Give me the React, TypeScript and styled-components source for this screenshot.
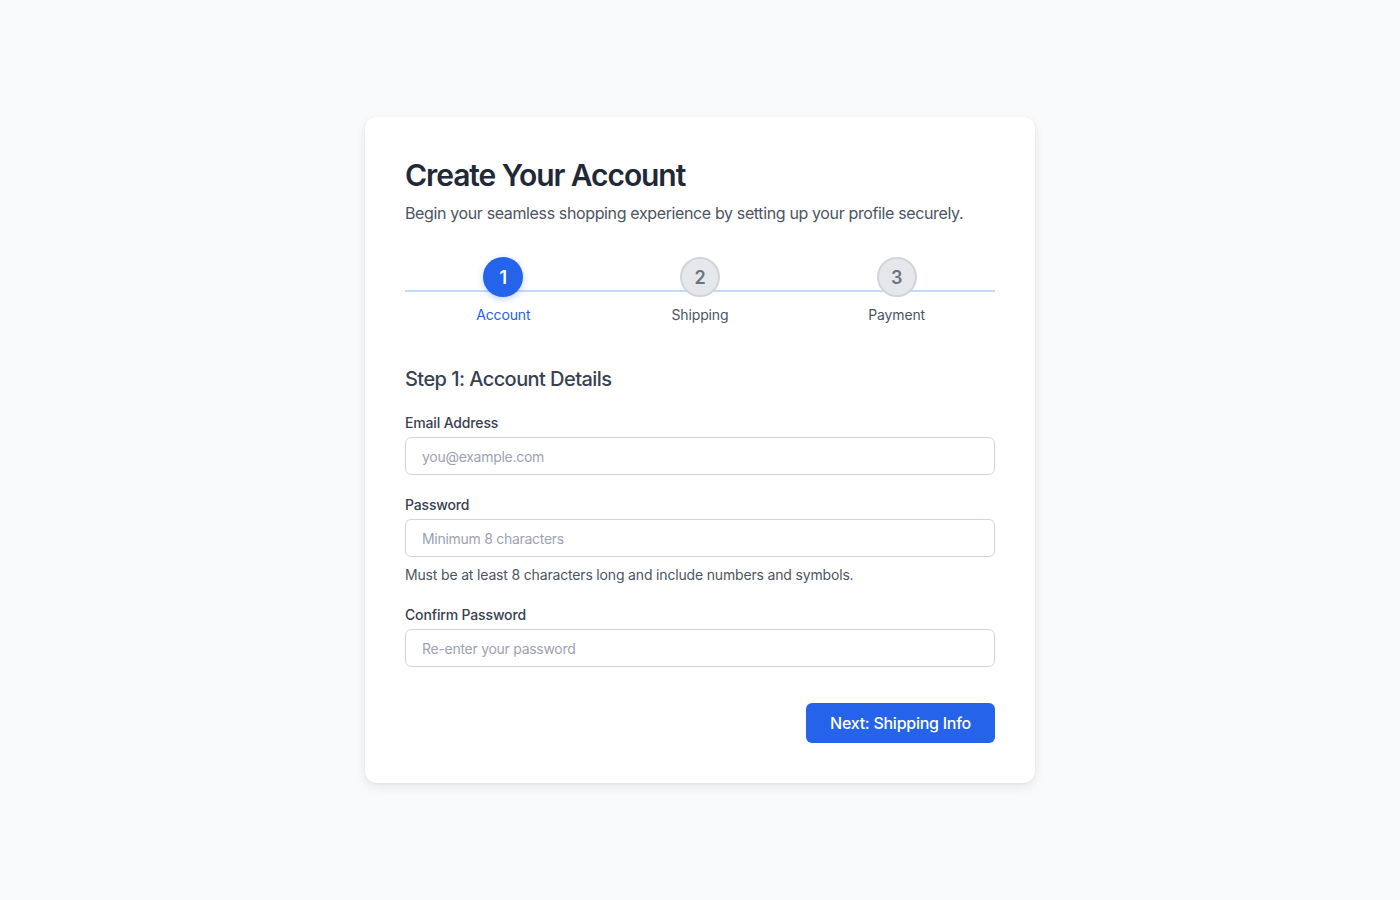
import React from "react";
import styled, { createGlobalStyle } from "styled-components";

const GlobalStyle = createGlobalStyle`
  * { box-sizing: border-box; }
  body {
    margin: 0;
    background: #f9fafb;
    font-family: Inter, "Noto Sans", "Liberation Sans", sans-serif;
    color: #1f2937;
  }
`;

const Page = styled.div`
  min-height: 100vh;
  display: flex;
  align-items: center;
  justify-content: center;
`;

const Card = styled.div`
  width: 670px;
  background: #ffffff;
  border-radius: 12px;
  padding: 40px;
  box-shadow: 0 4px 12px rgba(17, 24, 39, 0.08), 0 1px 3px rgba(17, 24, 39, 0.05);
`;

const Title = styled.h1`
  margin: 0;
  font-size: 30px;
  line-height: 36px;
  font-weight: 600;
  letter-spacing: -0.036em;
  color: #1f2937;
`;

const Subtitle = styled.p`
  margin: 8px 0 0;
  font-size: 16px;
  line-height: 24px;
  letter-spacing: -0.023em;
  color: #4b5563;
`;

const Stepper = styled.div`
  position: relative;
  margin-top: 32px;
  display: grid;
  grid-template-columns: repeat(3, 1fr);

  &::before {
    content: "";
    position: absolute;
    left: 0;
    right: 0;
    top: 50%;
    height: 2px;
    margin-top: -1px;
    background: #bfdbfe;
  }
`;

const Step = styled.div`
  position: relative;
  z-index: 1;
  display: flex;
  flex-direction: column;
  align-items: center;
  gap: 8px;
`;

const Circle = styled.div<{ $active: boolean }>`
  width: 40px;
  height: 40px;
  border-radius: 50%;
  display: flex;
  align-items: center;
  justify-content: center;
  font-size: 18px;
  font-weight: 600;
  background: ${(p) => (p.$active ? "#2563eb" : "#e5e7eb")};
  color: ${(p) => (p.$active ? "#ffffff" : "#6b7280")};
  border: ${(p) => (p.$active ? "none" : "2px solid #d1d5db")};
  box-shadow: ${(p) => (p.$active ? "0 2px 6px rgba(37, 99, 235, 0.3)" : "none")};
`;

const StepLabel = styled.span<{ $active: boolean }>`
  font-size: 14px;
  line-height: 20px;
  font-weight: 400;
  letter-spacing: -0.01em;
  color: ${(p) => (p.$active ? "#2563eb" : "#4b5563")};
`;

const SectionTitle = styled.h2`
  margin: 40px 0 0;
  font-size: 20px;
  line-height: 28px;
  font-weight: 500;
  letter-spacing: -0.028em;
  color: #374151;
`;

const Field = styled.div`
  margin-top: 20px;
  display: flex;
  flex-direction: column;
`;

const Label = styled.label`
  font-size: 14px;
  line-height: 20px;
  font-weight: 500;
  letter-spacing: -0.011em;
  color: #374151;
  margin-bottom: 4px;
`;

const Input = styled.input`
  height: 38px;
  width: 100%;
  border: 1px solid #d1d5db;
  border-radius: 6px;
  padding: 0 16px;
  font-family: inherit;
  font-size: 14px;
  letter-spacing: -0.02em;
  color: #1f2937;
  background: #ffffff;
  outline: none;

  &::placeholder {
    color: #9ca3af;
  }
`;

const Hint = styled.p`
  margin: 8px 0 0;
  font-size: 14px;
  line-height: 20px;
  letter-spacing: -0.012em;
  color: #4b5563;
`;

const Actions = styled.div`
  margin-top: 36px;
  display: flex;
  justify-content: flex-end;
`;

const PrimaryButton = styled.button`
  height: 40px;
  padding: 0 24px;
  border: none;
  border-radius: 6px;
  background: #2563eb;
  color: #ffffff;
  font-family: inherit;
  font-size: 16px;
  font-weight: 500;
  letter-spacing: -0.016em;
  cursor: pointer;
`;

const steps = [
  { n: 1, label: "Account" },
  { n: 2, label: "Shipping" },
  { n: 3, label: "Payment" },
];

export default function App() {
  const current = 1;
  return (
    <Page>
      <GlobalStyle />
      <Card>
        <Title>Create Your Account</Title>
        <Subtitle>
          Begin your seamless shopping experience by setting up your profile securely.
        </Subtitle>

        <Stepper>
          {steps.map((s) => (
            <Step key={s.n}>
              <Circle $active={s.n === current}>{s.n}</Circle>
              <StepLabel $active={s.n === current}>{s.label}</StepLabel>
            </Step>
          ))}
        </Stepper>

        <SectionTitle>Step 1: Account Details</SectionTitle>

        <Field>
          <Label htmlFor="email">Email Address</Label>
          <Input id="email" type="email" placeholder="you@example.com" />
        </Field>

        <Field>
          <Label htmlFor="password">Password</Label>
          <Input id="password" type="password" placeholder="Minimum 8 characters" />
          <Hint>Must be at least 8 characters long and include numbers and symbols.</Hint>
        </Field>

        <Field>
          <Label htmlFor="confirm">Confirm Password</Label>
          <Input id="confirm" type="password" placeholder="Re-enter your password" />
        </Field>

        <Actions>
          <PrimaryButton type="button">Next: Shipping Info</PrimaryButton>
        </Actions>
      </Card>
    </Page>
  );
}
